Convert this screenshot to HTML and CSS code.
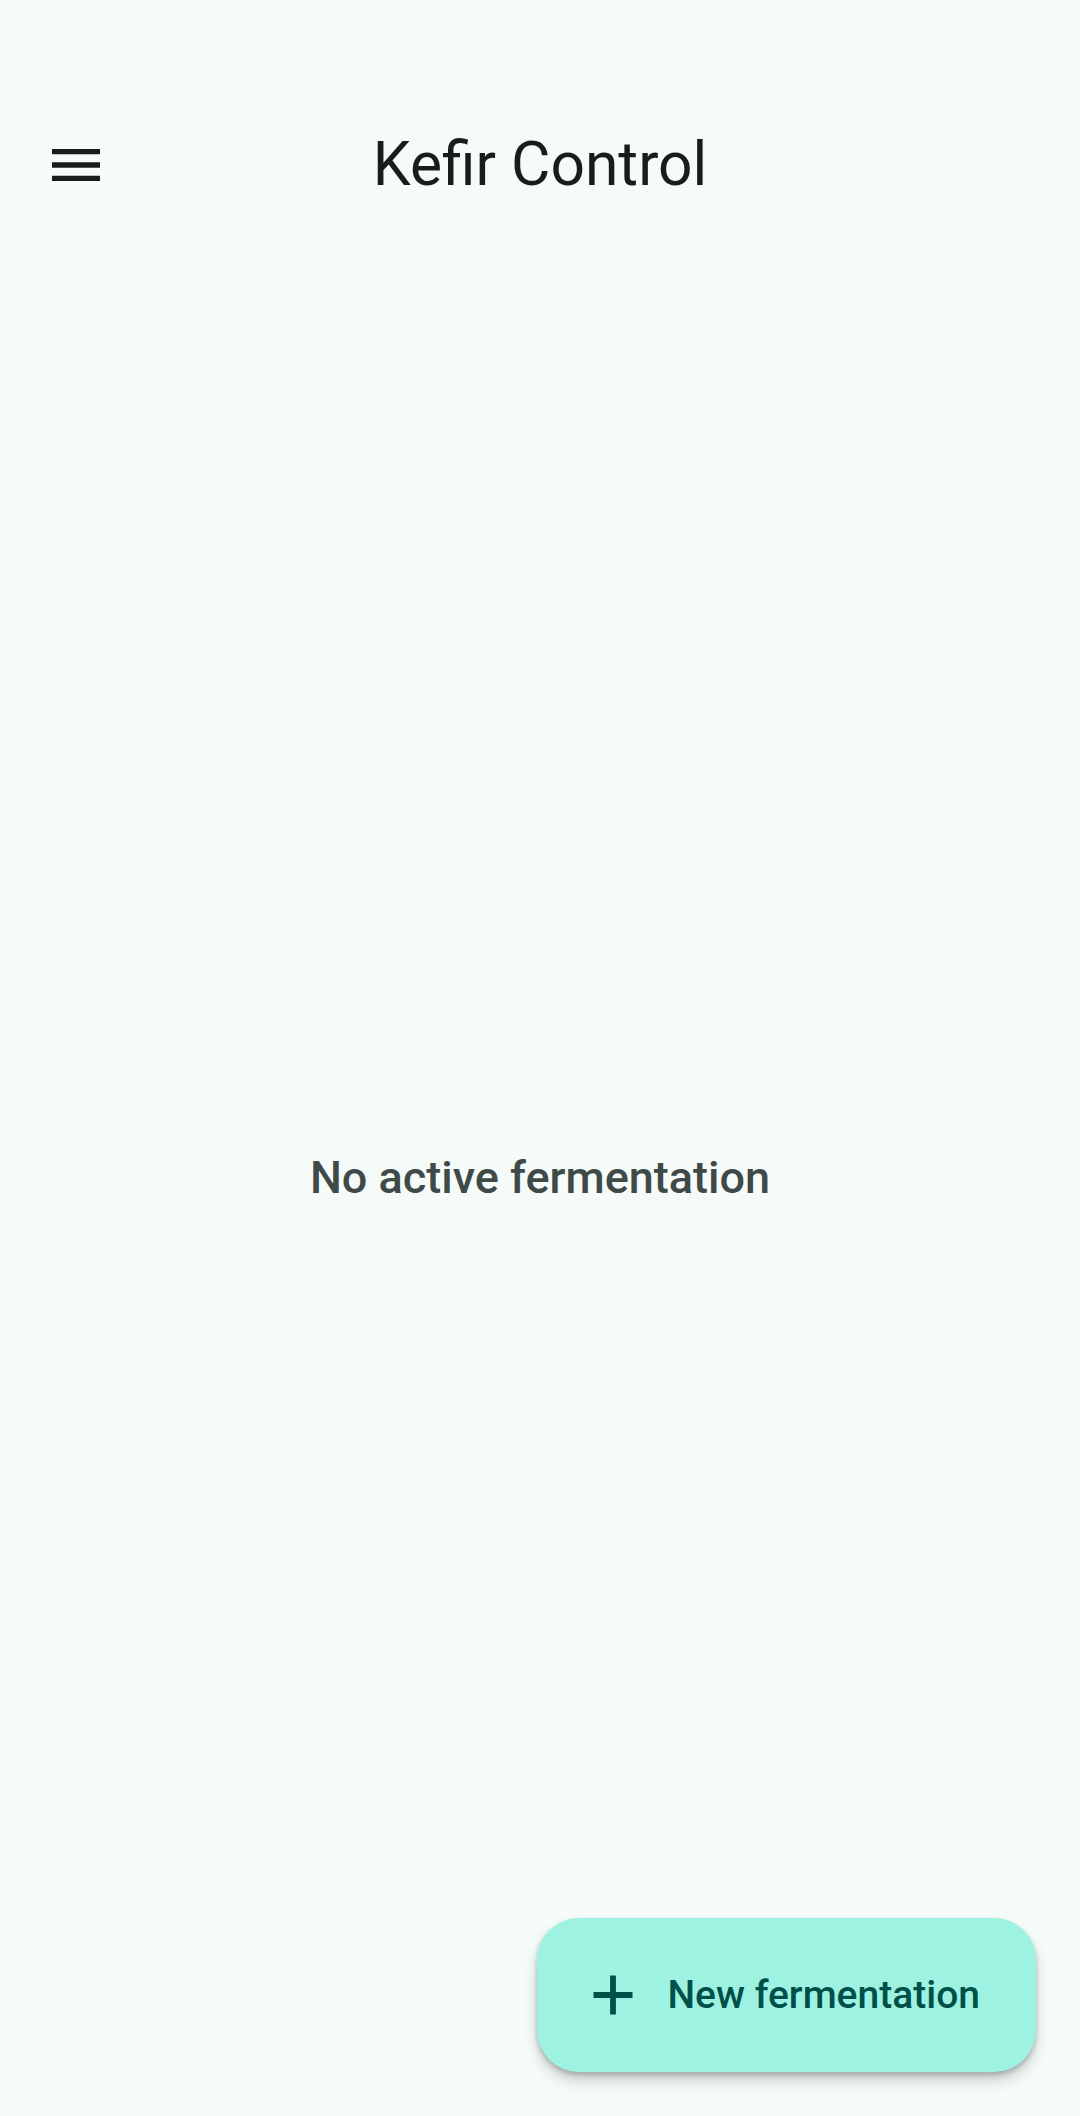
FILE: index.html
```html
<!DOCTYPE html>
<html lang="en">
<head>
<meta charset="utf-8">
<title>Kefir Control</title>
<link rel="stylesheet" href="styles.css">
</head>
<body>
<div class="screen">
  <header class="top-bar">
    <button class="icon-btn" aria-label="Menu">
      <svg class="menu-icon" viewBox="0 0 24 24" width="64" height="64">
        <path d="M3 18h18v-2H3v2zm0-5h18v-2H3v2zm0-7v2h18V6H3z" fill="#171d1c"/>
      </svg>
    </button>
    <h1 class="title">Kefir Control</h1>
  </header>
  <main class="content">
    <p class="empty">No active fermentation</p>
  </main>
  <button class="fab">
    <svg class="plus" viewBox="0 0 40 40" width="40" height="40">
      <path d="M20 0.5v39M0.5 20h39" stroke="#00504a" stroke-width="5.8" fill="none"/>
    </svg>
    <span class="fab-label">New fermentation</span>
  </button>
</div>
</body>
</html>
```
FILE: styles.css
```css
* { box-sizing: border-box; }
html, body {
  margin: 0;
  padding: 0;
  background: #f4fbf8;
}
body {
  font-family: Roboto, "Noto Sans", sans-serif;
}
.screen {
  position: relative;
  width: 1080px;
  height: 2116px;
  display: flex;
  flex-direction: column;
  background: #f4fbf8;
  overflow: hidden;
}
.top-bar {
  position: relative;
  height: 249px;
  padding-top: 81px;
  display: flex;
  align-items: center;
  justify-content: center;
}
.icon-btn {
  position: absolute;
  left: 44px;
  top: 133px;
  width: 64px;
  height: 64px;
  padding: 0;
  border: 0;
  background: transparent;
  display: flex;
}
.title {
  margin: 0;
  font-size: 60.5px;
  font-weight: 400;
  color: #171d1c;
  line-height: 1;
}
.content {
  flex: 1;
  display: flex;
  align-items: center;
  justify-content: center;
  padding-bottom: 11px;
}
.empty {
  margin: 0;
  font-size: 45px;
  font-weight: 500;
  color: #3f4947;
}
.fab {
  position: absolute;
  right: 44px;
  bottom: 44px;
  height: 154px;
  padding: 0 56px 0 56px;
  border: 0;
  border-radius: 42px;
  background: #9ef2e1;
  display: flex;
  align-items: center;
  gap: 34px;
  box-shadow: 0 9px 14px rgba(0, 0, 0, 0.17), 0 3px 5px rgba(0, 0, 0, 0.2);
  font-family: Roboto, "Noto Sans", sans-serif;
}
.plus { display: block; }
.fab-label {
  font-size: 39px;
  font-weight: 500;
  color: #00504a;
}
```
